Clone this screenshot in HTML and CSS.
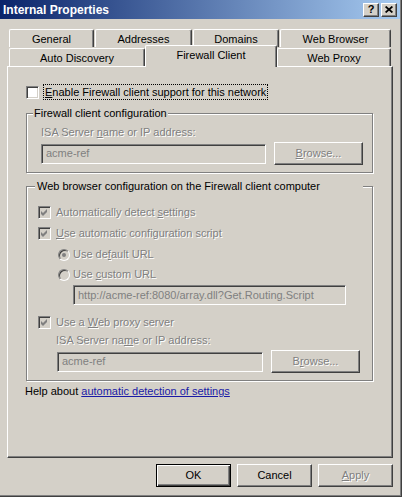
FILE: index.html
```html
<!DOCTYPE html>
<html>
<head>
<meta charset="utf-8">
<title>Internal Properties</title>
<link rel="stylesheet" href="styles.css">
</head>
<body>
<div class="window">
  <div class="titlebar">
    <span class="title">Internal Properties</span>
    <span class="tbtn qmark">?</span>
    <span class="tbtn close"><svg width="8" height="7" viewBox="0 0 8 7"><path d="M0.6 0.5L7.4 6.5M7.4 0.5L0.6 6.5" stroke="#000" stroke-width="1.7"/></svg></span>
  </div>
  <div class="client">
    <div class="tabs">
      <div class="tab-row row-back">
        <div class="tab t-general">General</div>
        <div class="tab t-addr">Addresses</div>
        <div class="tab t-dom">Domains</div>
        <div class="tab t-browser">Web Browser</div>
      </div>
      <div class="tab-row row-front">
        <div class="tab t-auto">Auto Discovery</div>
        <div class="tab t-fw selected">Firewall Client</div>
        <div class="tab t-proxy">Web Proxy</div>
      </div>
    </div>
    <div class="panel">
      <div class="check-row enable">
        <span class="cb cb-white"></span>
        <span class="focus-label"><u>E</u>nable Firewall client support for this network</span>
      </div>

      <fieldset class="group g1">
        <legend>Firewall client configuration</legend>
        <div class="dis-label g1-label">ISA Server <u>n</u>ame or IP address:</div>
        <div class="field-row g1-row">
          <div class="input g1-input">acme-ref</div>
          <div class="btn btn-dis browse"><span class="dis-text"><u>B</u>rowse...</span></div>
        </div>
      </fieldset>

      <fieldset class="group g2">
        <legend>Web browser configuration on the Firewall client computer</legend>
        <div class="check-row r-auto">
          <span class="cb cb-dis"><svg width="11" height="11" viewBox="0 0 11 11"><polygon points="2,4 4,6 8,2 8,5 4,9 2,7" fill="#808080"/></svg></span>
          <span class="dis-text">Automatically detect <u>s</u>ettings</span>
        </div>
        <div class="check-row r-script">
          <span class="cb cb-dis"><svg width="11" height="11" viewBox="0 0 11 11"><polygon points="2,4 4,6 8,2 8,5 4,9 2,7" fill="#808080"/></svg></span>
          <span class="dis-text"><u>U</u>se automatic configuration script</span>
        </div>
        <div class="radio-row r-default">
          <span class="radio"><span class="dot"></span></span>
          <span class="dis-text">Use de<u>f</u>ault URL</span>
        </div>
        <div class="radio-row r-custom">
          <span class="radio"></span>
          <span class="dis-text">Use <u>c</u>ustom URL</span>
        </div>
        <div class="input url-input">http://acme-ref:8080/array.dll?Get.Routing.Script</div>
        <div class="check-row r-proxy">
          <span class="cb cb-dis"><svg width="11" height="11" viewBox="0 0 11 11"><polygon points="2,4 4,6 8,2 8,5 4,9 2,7" fill="#808080"/></svg></span>
          <span class="dis-text">Use a <u>W</u>eb proxy server</span>
        </div>
        <div class="dis-label g2-label">ISA Server na<u>m</u>e or IP address:</div>
        <div class="field-row g2-row">
          <div class="input g2-input">acme-ref</div>
          <div class="btn btn-dis browse"><span class="dis-text">B<u>r</u>owse...</span></div>
        </div>
      </fieldset>

      <div class="help-line">Help about <a class="link" href="#">automatic detection of settings</a></div>
    </div>
    <div class="buttons">
      <div class="btn btn-default">OK</div>
      <div class="btn">Cancel</div>
      <div class="btn btn-dis"><span class="dis-text"><u>A</u>pply</span></div>
    </div>
  </div>
</div>
</body>
</html>
```

FILE: styles.css
```css
* { box-sizing: border-box; }
html, body { margin: 0; padding: 0; }
body {
  width: 402px;
  height: 497px;
  overflow: hidden;
  background: #d4d0c8;
  font-family: "Liberation Sans", Arial, sans-serif;
  font-size: 11px;
  line-height: 13px;
  color: #000;
}
u { text-decoration: underline; text-underline-offset: 1px; }

.window {
  width: 402px;
  height: 497px;
  padding: 0 1px 1px 0;
  border-right: 1px solid #404040;
  border-bottom: 1px solid #404040;
  box-shadow: inset -1px -1px 0 #808080;
  display: flex;
  flex-direction: column;
}

/* title bar */
.titlebar {
  height: 19px;
  flex: none;
  display: flex;
  align-items: center;
  padding: 0 3px 0 3px;
  background: linear-gradient(to right, #0a246a, #a6caf0);
  color: #fff;
}
.title {
  flex: 1;
  font-weight: bold;
  font-size: 12px;
  padding-top: 1px;
}
.tbtn {
  width: 16px;
  height: 14px;
  margin-left: 2px;
  display: flex;
  align-items: center;
  justify-content: center;
  background: #d4d0c8;
  border: 1px solid;
  border-color: #fff #404040 #404040 #fff;
  box-shadow: inset -1px -1px 0 #808080;
  color: #000;
}
.qmark { font-weight: bold; font-size: 11px; padding-bottom: 1px; }

/* client area */
.client {
  flex: 1;
  padding: 10px 7px 0 7px;
  display: flex;
  flex-direction: column;
}

/* tabs */
.tabs { margin-left: 2px; }
.tab-row { display: flex; }
.row-back { height: 18px; }
.row-front { height: 19px; align-items: flex-end; }
.tab {
  height: 18px;
  display: flex;
  align-items: center;
  justify-content: center;
  padding-top: 1px;
  border-top: 1px solid #fff;
  border-left: 1px solid #fff;
  border-right: 1px solid #404040;
  border-radius: 2px 2px 0 0;
  box-shadow: inset -1px 0 0 #808080;
  background: #d4d0c8;
}
.t-general { width: 85px; margin-right: 1px; }
.t-addr { width: 97px; margin-right: 1px; }
.t-dom { width: 86px; margin-right: 1px; }
.t-browser { width: 111px; }
.t-auto { width: 136px; }
.t-fw { width: 132px; }
.t-proxy { width: 114px; }
.tab.selected {
  height: 22px;
  margin-bottom: -1px;
  padding-top: 0;
  padding-bottom: 3px;
  position: relative;
  z-index: 1;
}

/* panel */
.panel {
  width: 386px;
  height: 392px;
  flex: none;
  border: 1px solid;
  border-color: #fff #404040 #404040 #fff;
  box-shadow: inset -1px -1px 0 #808080;
  padding: 0;
}

.check-row, .radio-row {
  display: flex;
  align-items: center;
  height: 13px;
}
.cb {
  width: 13px;
  height: 13px;
  flex: none;
  border: 1px solid;
  border-color: #808080 #fff #fff #808080;
  box-shadow: inset 1px 1px 0 #404040, inset -1px -1px 0 #d4d0c8;
  display: flex;
}
.cb-white { background: #fff; }
.cb-dis { background: #d4d0c8; }
.cb svg { display: block; }

.enable {
  height: 16px;
  margin: 17px 0 0 18px;
}
.focus-label {
  margin-left: 4px;
  height: 16px;
  padding: 0 1px 0 1px;
  border: 1px dotted #000;
  display: flex;
  align-items: center;
  white-space: nowrap;
}

.dis-text, .dis-label {
  color: #808080;
  text-shadow: 1px 1px 0 #fff;
  white-space: nowrap;
}

/* group boxes */
.group {
  margin: 0;
  padding: 0;
  min-width: 0;
  width: 347px;
  margin-left: 18px;
  border: 1px solid #808080;
  box-shadow: inset 1px 1px 0 #fff, 1px 1px 0 #fff;
}
.group legend {
  padding: 0 1px;
  line-height: 13px;
  background: #d4d0c8;
  white-space: nowrap;
}
.g1 { margin-top: 7px; padding: 0 0 7px 14px; }
.g1 legend { margin-left: -8px; }
.g2 { margin-top: 7px; padding: 0 0 7px 11px; }
.g2 legend { margin-left: -3px; padding-left: 2px; width: 328px; }

.g1-label { margin-top: 6px; }
.field-row {
  display: flex;
  align-items: center;
  height: 23px;
}
.g1-row { margin-top: 3px; }
.input {
  height: 20px;
  flex: none;
  border: 1px solid;
  border-color: #808080 #fff #fff #808080;
  box-shadow: inset 1px 1px 0 #404040, inset -1px -1px 0 #d4d0c8;
  background: #d4d0c8;
  color: #808080;
  padding: 0 0 0 4px;
  display: flex;
  align-items: center;
  white-space: nowrap;
}
.g1-input { width: 225px; }

.r-auto { margin-top: 13px; }
.r-script { margin-top: 8px; }
.check-row .dis-text { margin-left: 5px; }
.radio-row { margin-left: 20px; }
.r-default { margin-top: 8px; }
.r-custom { margin-top: 7px; }
.radio {
  width: 12px;
  height: 12px;
  flex: none;
  border-radius: 50%;
  border: 1px solid;
  border-color: #808080 #fff #fff #808080;
  box-shadow: inset 1px 1px 0 #404040;
  background: #d4d0c8;
  display: flex;
  align-items: center;
  justify-content: center;
}
.dot {
  width: 4px;
  height: 4px;
  border-radius: 50%;
  background: #808080;
}
.radio-row .dis-text { margin-left: 3px; }
.url-input { width: 273px; margin: 4px 0 0 35px; }
.r-proxy { margin-top: 11px; }
.g2-label { margin: 5px 0 0 18px; }
.g2-row { margin: 3px 0 0 19px; }
.g2-input { width: 206px; }

.help-line {
  margin: 4px 0 0 17px;
  white-space: nowrap;
}
.link { color: #1a1aa6; text-decoration: underline; }

/* buttons */
.buttons {
  display: flex;
  justify-content: flex-end;
  gap: 6px;
  margin-top: 6px;
}
.btn {
  width: 75px;
  height: 23px;
  flex: none;
  display: flex;
  align-items: center;
  justify-content: center;
  background: #d4d0c8;
  border: 1px solid;
  border-color: #fff #404040 #404040 #fff;
  box-shadow: inset -1px -1px 0 #808080;
  white-space: nowrap;
}
.btn.browse { width: 89px; margin-left: 8px; }
.btn-default {
  border-color: #000;
  box-shadow: inset 1px 1px 0 #fff, inset -1px -1px 0 #404040, inset -2px -2px 0 #808080;
}
```
